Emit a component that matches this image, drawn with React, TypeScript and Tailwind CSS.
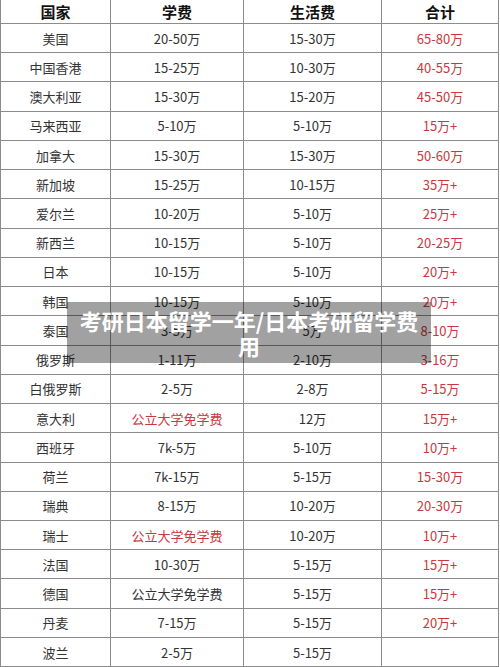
import React from "react";

type Row = { c: string; t: string; tRed?: boolean; l: string; s: string };

const rows: Row[] = [
  { c: "美国", t: "20-50万", l: "15-30万", s: "65-80万" },
  { c: "中国香港", t: "15-25万", l: "10-30万", s: "40-55万" },
  { c: "澳大利亚", t: "15-30万", l: "15-20万", s: "45-50万" },
  { c: "马来西亚", t: "5-10万", l: "5-10万", s: "15万+" },
  { c: "加拿大", t: "15-30万", l: "15-30万", s: "50-60万" },
  { c: "新加坡", t: "15-25万", l: "10-15万", s: "35万+" },
  { c: "爱尔兰", t: "10-20万", l: "5-10万", s: "25万+" },
  { c: "新西兰", t: "10-15万", l: "5-10万", s: "20-25万" },
  { c: "日本", t: "10-15万", l: "5-10万", s: "20万+" },
  { c: "韩国", t: "10-15万", l: "5-10万", s: "20万+" },
  { c: "泰国", t: "3-5万", l: "5万", s: "8-10万" },
  { c: "俄罗斯", t: "1-11万", l: "2-10万", s: "3-16万" },
  { c: "白俄罗斯", t: "2-5万", l: "2-8万", s: "5-15万" },
  { c: "意大利", t: "公立大学免学费", tRed: true, l: "12万", s: "15万+" },
  { c: "西班牙", t: "7k-5万", l: "5-10万", s: "10万+" },
  { c: "荷兰", t: "7k-15万", l: "5-15万", s: "15-30万" },
  { c: "瑞典", t: "8-15万", l: "10-20万", s: "20-30万" },
  { c: "瑞士", t: "公立大学免学费", tRed: true, l: "10-20万", s: "10万+" },
  { c: "法国", t: "10-30万", l: "5-15万", s: "15万+" },
  { c: "德国", t: "公立大学免学费", l: "5-15万", s: "15万+" },
  { c: "丹麦", t: "7-15万", l: "5-15万", s: "20万+" },
  { c: "波兰", t: "2-5万", l: "5-15万", s: "" },
];

const font = {
  fontFamily:
    '"Noto Sans CJK SC", "Noto Sans", "Liberation Sans", sans-serif',
};

export default function App() {
  return (
    <div
      className="relative w-[500px] h-[667px] overflow-hidden bg-white"
      style={font}
    >
      <div className="grid grid-cols-[110px_133px_138px_117px] border-l border-[#8c8c8c] w-[499px]">
        {["国家", "学费", "生活费", "合计"].map((h) => (
          <div
            key={h}
            className="h-[24px] flex items-center justify-center border-r border-b border-[#8c8c8c] text-[15px] font-bold text-[#111] leading-none"
          >
            {h}
          </div>
        ))}
        {rows.map((r) => (
          <React.Fragment key={r.c}>
            <div className="h-[29.24px] flex items-center justify-center border-r border-b border-[#8c8c8c] text-[13px] text-[#333] leading-none">
              {r.c}
            </div>
            <div
              className={`h-[29.24px] flex items-center justify-center border-r border-b border-[#8c8c8c] text-[13px] leading-none ${
                r.tRed ? "text-[#c8383c]" : "text-[#333]"
              }`}
            >
              {r.t}
            </div>
            <div className="h-[29.24px] flex items-center justify-center border-r border-b border-[#8c8c8c] text-[13px] text-[#333] leading-none">
              {r.l}
            </div>
            <div className="h-[29.24px] flex items-center justify-center border-r border-b border-[#8c8c8c] text-[13px] text-[#c8383c] leading-none">
              {r.s}
            </div>
          </React.Fragment>
        ))}
      </div>
      <div className="absolute left-[67px] top-[302px] w-[364px] h-[61px] bg-[rgba(0,0,0,0.37)] flex items-center justify-center px-[10px]">
        <p className="text-white font-bold text-[22px] leading-[25px] text-center">
          考研日本留学一年/日本考研留学费用
        </p>
      </div>
    </div>
  );
}
